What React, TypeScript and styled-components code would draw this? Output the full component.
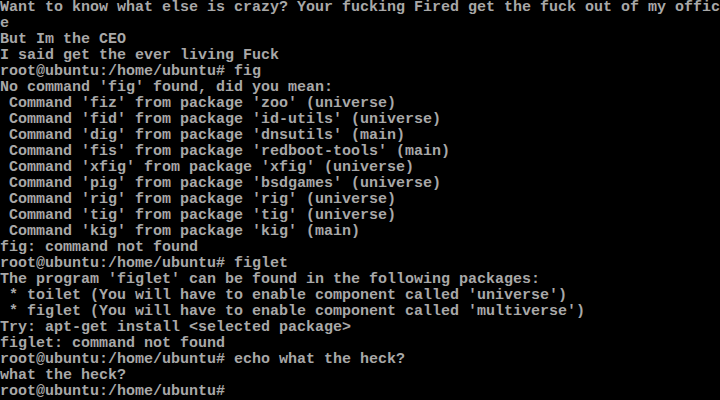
import React from "react";
import styled, { createGlobalStyle } from "styled-components";

const Global = createGlobalStyle`
  html, body { margin: 0; padding: 0; background: #000; }
  body { width: 720px; height: 400px; overflow: hidden; }
`;

const Screen = styled.div`
  width: 720px;
  height: 400px;
  background: #000;
  display: flex;
  flex-direction: column;
  overflow: hidden;
`;

const Line = styled.div`
  height: 16px;
  line-height: 16px;
  font-family: "Liberation Mono", "DejaVu Sans Mono", monospace;
  font-size: 15px;
  font-weight: bold;
  color: #a8a8a8;
  white-space: pre;
`;

const lines = [
  "Want to know what else is crazy? Your fucking Fired get the fuck out of my offic",
  "e",
  "But Im the CEO",
  "I said get the ever living Fuck",
  "root@ubuntu:/home/ubuntu# fig",
  "No command 'fig' found, did you mean:",
  " Command 'fiz' from package 'zoo' (universe)",
  " Command 'fid' from package 'id-utils' (universe)",
  " Command 'dig' from package 'dnsutils' (main)",
  " Command 'fis' from package 'redboot-tools' (main)",
  " Command 'xfig' from package 'xfig' (universe)",
  " Command 'pig' from package 'bsdgames' (universe)",
  " Command 'rig' from package 'rig' (universe)",
  " Command 'tig' from package 'tig' (universe)",
  " Command 'kig' from package 'kig' (main)",
  "fig: command not found",
  "root@ubuntu:/home/ubuntu# figlet",
  "The program 'figlet' can be found in the following packages:",
  " * toilet (You will have to enable component called 'universe')",
  " * figlet (You will have to enable component called 'multiverse')",
  "Try: apt-get install <selected package>",
  "figlet: command not found",
  "root@ubuntu:/home/ubuntu# echo what the heck?",
  "what the heck?",
  "root@ubuntu:/home/ubuntu#",
];

export default function App() {
  return (
    <>
      <Global />
      <Screen>
        {lines.map((l, i) => (
          <Line key={i}>{l}</Line>
        ))}
      </Screen>
    </>
  );
}
